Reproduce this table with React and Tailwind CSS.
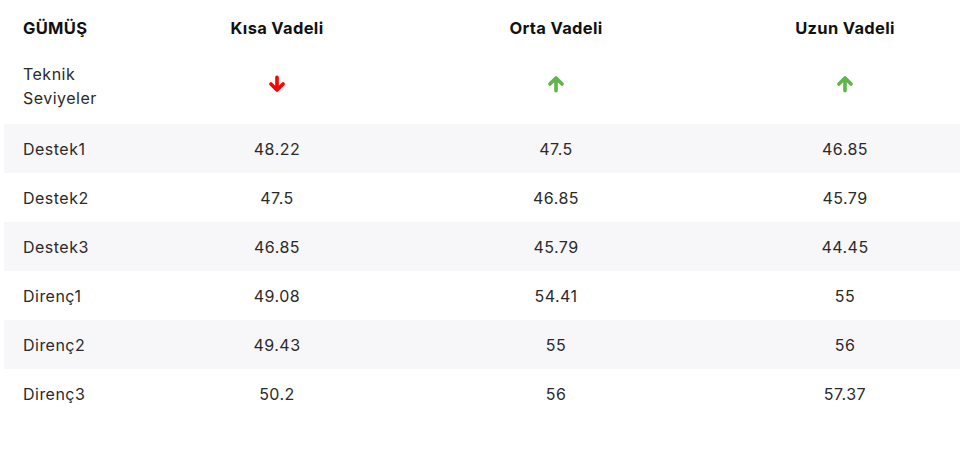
import React from 'react';

const rows = [
  ['Destek1', '48.22', '47.5', '46.85'],
  ['Destek2', '47.5', '46.85', '45.79'],
  ['Destek3', '46.85', '45.79', '44.45'],
  ['Direnç1', '49.08', '54.41', '55'],
  ['Direnç2', '49.43', '55', '56'],
  ['Direnç3', '50.2', '56', '57.37'],
];

const Arrow = ({ up }) => (
  <svg
    viewBox="0 0 16 16"
    fill="none"
    strokeWidth="3.2"
    strokeLinecap="round"
    strokeLinejoin="round"
    className={up ? 'w-[18px] h-[18px] rotate-180 stroke-[#5fb547]' : 'w-[18px] h-[18px] stroke-[#ff0000]'}
  >
    <path d="M8 2v11.2M2.6 8L8 13.4l5.4-5.4" />
  </svg>
);

const cols = 'grid grid-cols-[168px_210px_348px_230px]';

export default function App() {
  return (
    <div className="w-[960px] h-[458px] bg-white pl-[4px] text-[#2a2a2a] font-['Inter',sans-serif] text-[16px] tracking-[0.03em]">
      <div className={`${cols} h-[56px] items-center font-bold text-[16.5px] tracking-[0.02em] text-[#111]`}>
        <div className="pl-[19px]">GÜMÜŞ</div>
        <div className="text-center">Kısa Vadeli</div>
        <div className="text-center">Orta Vadeli</div>
        <div className="text-center">Uzun Vadeli</div>
      </div>
      <div className={`${cols} h-[68px] items-start`}>
        <div className="pl-[19px] pt-[6px] leading-[24px]">
          Teknik
          <br />
          Seviyeler
        </div>
        <div className="flex justify-center pt-[19px]"><Arrow /></div>
        <div className="flex justify-center pt-[19px]"><Arrow up /></div>
        <div className="flex justify-center pt-[19px]"><Arrow up /></div>
      </div>
      {rows.map((r, i) => (
        <div
          key={r[0]}
          className={`${cols} h-[49px] items-center ${i % 2 === 0 ? 'bg-[#f7f7f9]' : ''}`}
        >
          <div className="pl-[19px]">{r[0]}</div>
          <div className="text-center">{r[1]}</div>
          <div className="text-center">{r[2]}</div>
          <div className="text-center">{r[3]}</div>
        </div>
      ))}
    </div>
  );
}
